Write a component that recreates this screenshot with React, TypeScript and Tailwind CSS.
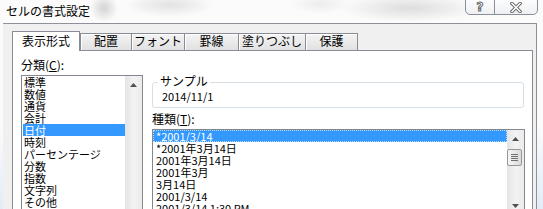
import React from "react";

const cats = ["標準", "数値", "通貨", "会計", "日付", "時刻", "パーセンテージ", "分数", "指数", "文字列", "その他"];
const types = ["*2001/3/14", "*2001年3月14日", "2001年3月14日", "2001年3月", "3月14日", "2001/3/14", "2001/3/14 1:30 PM"];
const tabs = [
  { label: "配置", cls: "w-[52px]" },
  { label: "フォント", cls: "w-[54px] -ml-px" },
  { label: "罫線", cls: "w-[55px] -ml-px" },
  { label: "塗りつぶし", cls: "w-[68px] -ml-px" },
  { label: "保護", cls: "w-[53px] -ml-px" },
];

function Arrow({ down }: { down?: boolean }) {
  return (
    <svg width="7" height="4" viewBox="0 0 7 4">
      <polygon points={down ? "0,0 7,0 3.5,4" : "0,4 7,4 3.5,0"} fill="#505050" />
    </svg>
  );
}

function ScrollBar({ thumb }: { thumb?: boolean }) {
  return (
    <div className="w-[17px] shrink-0 flex flex-col bg-gradient-to-r from-[#e4e4e4] via-[#f3f3f3] to-[#ebebeb]">
      <div className="h-[17px] flex items-center justify-center">
        <Arrow />
      </div>
      {thumb && (
        <div className="mt-[2px] w-[15px] h-[17px] rounded-[2px] border border-[#979797] bg-gradient-to-r from-[#f6f6f6] to-[#dadada] flex flex-col items-center justify-center gap-[1px]">
          <div className="h-px w-[7px] bg-[#6f6f6f]" />
          <div className="h-px w-[7px] bg-[#6f6f6f]" />
          <div className="h-px w-[7px] bg-[#6f6f6f]" />
          <div className="h-px w-[7px] bg-[#6f6f6f]" />
        </div>
      )}
      <div className="flex-1" />
      <div className="h-[17px] flex items-center justify-center">
        <Arrow down />
      </div>
    </div>
  );
}

export default function App() {
  return (
    <div className="w-[543px] h-[209px] overflow-hidden flex flex-col bg-[#fbfbfb] bg-[linear-gradient(to_bottom,#fbfbfb_60%,#e2ecf8)] text-[12px] leading-[12px] text-black font-['Noto_Sans_CJK_JP','Noto_Sans',sans-serif]">
      {/* title bar */}
      <div className="h-[23px] shrink-0 flex justify-between bg-[#fbfbfb] bg-[radial-gradient(ellipse_14px_14px_at_104px_8px,#d4d4d4,transparent),radial-gradient(ellipse_45px_12px_at_170px_5px,#e2e2e2,transparent),radial-gradient(ellipse_30px_10px_at_320px_4px,#ececec,transparent),radial-gradient(ellipse_70px_14px_at_410px_8px,#dddddd,transparent)]">
        <div className="pl-[6px] pt-[5px]">セルの書式設定</div>
        <div className="mr-[5px] -mt-[4px] h-[19px] w-[73px] flex rounded-b-[5px] border border-[#8b8f97] bg-gradient-to-b from-[#ffffff] to-[#eef0f3]">
          <div className="w-[29px] border-r border-[#8b8f97] flex items-center justify-center pt-[3px]">
            <span className="text-[12px] leading-[12px] font-bold text-white font-['DejaVu_Sans',sans-serif] [-webkit-text-stroke:1px_#6a6a6a]">?</span>
          </div>
          <div className="flex-1 flex items-center justify-center pt-[3px]">
            <svg width="12" height="11" viewBox="0 0 12 11">
              <path d="M2 1.5 L10 9.5 M10 1.5 L2 9.5" stroke="#707070" strokeWidth="3.4" strokeLinecap="square" />
              <path d="M2 1.5 L10 9.5 M10 1.5 L2 9.5" stroke="#ffffff" strokeWidth="1.4" strokeLinecap="square" />
            </svg>
          </div>
        </div>
      </div>

      {/* body */}
      <div className="ml-[3px] w-[534px] flex-1 flex flex-col border-t border-r border-[#8e9298] bg-[#f0f0f0]">
        {/* tab strip */}
        <div className="h-[26px] shrink-0 pl-[9px] flex items-end">
          <div className="relative z-10 w-[68px] h-[20px] -mb-px border-t border-l border-r border-[#898c95] bg-white pt-[3px] text-center">
            表示形式
          </div>
          {tabs.map((t) => (
            <div
              key={t.label}
              className={`${t.cls} h-[17px] border-t border-l border-r border-[#898c95] bg-gradient-to-b from-[#f4f4f4] to-[#e1e1e1] shadow-[inset_1px_1px_0_#ffffff] pt-[1px] text-center`}
            >
              {t.label}
            </div>
          ))}
        </div>

        {/* panel */}
        <div className="ml-[9px] w-[521px] flex-1 border border-[#898c95] bg-white flex">
          {/* left column */}
          <div className="pl-[8px] pt-[8px] flex flex-col">
            <div className="h-[12px]">
              分類(<span className="underline">C</span>):
            </div>
            <div className="mt-[4px] w-[122px] h-[160px] border border-[#828790] flex">
              <div className="w-[103px] pl-px flex flex-col text-[11px] leading-[12px]">
                {cats.map((c) => (
                  <div
                    key={c}
                    className={`h-[12px] pl-px whitespace-nowrap ${c === "日付" ? "bg-[#3399ff] text-white" : ""}`}
                  >
                    {c}
                  </div>
                ))}
              </div>
              <ScrollBar />
            </div>
          </div>

          {/* right column */}
          <div className="ml-[9px] flex flex-col">
            <div className="relative mt-[31px] w-[372px] h-[26px] rounded-[3px] border border-[#d5dfe5] pl-[9px] pt-[7px] text-[11px] leading-[12px]">
              <span className="absolute -top-[8px] left-[5px] px-[2px] bg-white text-[12px] leading-[12px]">サンプル</span>
              2014/11/1
            </div>
            <div className="mt-[5px] h-[12px]">
              種類(<span className="underline">T</span>):
            </div>
            <div className="mt-[4px] w-[373px] h-[86px] border border-[#828790] flex">
              <div className="flex-1 flex flex-col text-[11px] leading-[12px]">
                {types.map((t, i) => (
                  <div
                    key={t}
                    className={`h-[12px] pl-[3px] whitespace-nowrap ${
                      i === 0 ? "bg-[#3399ff] text-white outline-1 outline-dotted -outline-offset-1 outline-[#bcdcff]" : ""
                    }`}
                  >
                    {t}
                  </div>
                ))}
              </div>
              <ScrollBar thumb />
            </div>
          </div>
        </div>
      </div>
    </div>
  );
}
